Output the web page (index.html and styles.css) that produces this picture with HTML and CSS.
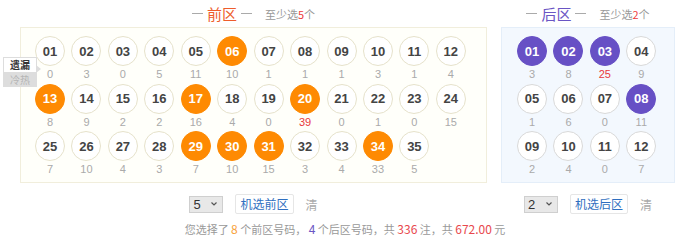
FILE: index.html
```html
<!DOCTYPE html>
<html lang="zh-CN">
<head>
  <meta charset="UTF-8" />
  <title>大乐透选号</title>
  <link rel="stylesheet" href="styles.css">
</head>
<body>
  <div class="zones">
    <div class="tabs">
      <div class="tab active">遗漏</div>
      <div class="tab">冷热</div>
    </div>

    <div class="zone front">
      <div class="zone-head">
        <span class="dash"></span><span class="title">前区</span><span class="dash"></span>
        <span class="tip">至少选<em>5</em>个</span>
      </div>
      <div class="box">
        <div class="ball-grid">
          <div class="cell"><span class="ball">01</span><span class="miss">0</span></div>
          <div class="cell"><span class="ball">02</span><span class="miss">3</span></div>
          <div class="cell"><span class="ball">03</span><span class="miss">0</span></div>
          <div class="cell"><span class="ball">04</span><span class="miss">5</span></div>
          <div class="cell"><span class="ball">05</span><span class="miss">11</span></div>
          <div class="cell"><span class="ball on">06</span><span class="miss">10</span></div>
          <div class="cell"><span class="ball">07</span><span class="miss">1</span></div>
          <div class="cell"><span class="ball">08</span><span class="miss">1</span></div>
          <div class="cell"><span class="ball">09</span><span class="miss">1</span></div>
          <div class="cell"><span class="ball">10</span><span class="miss">3</span></div>
          <div class="cell"><span class="ball">11</span><span class="miss">1</span></div>
          <div class="cell"><span class="ball">12</span><span class="miss">4</span></div>

          <div class="cell"><span class="ball on">13</span><span class="miss">8</span></div>
          <div class="cell"><span class="ball">14</span><span class="miss">9</span></div>
          <div class="cell"><span class="ball">15</span><span class="miss">2</span></div>
          <div class="cell"><span class="ball">16</span><span class="miss">2</span></div>
          <div class="cell"><span class="ball on">17</span><span class="miss">16</span></div>
          <div class="cell"><span class="ball">18</span><span class="miss">4</span></div>
          <div class="cell"><span class="ball">19</span><span class="miss">0</span></div>
          <div class="cell"><span class="ball on">20</span><span class="miss hot">39</span></div>
          <div class="cell"><span class="ball">21</span><span class="miss">0</span></div>
          <div class="cell"><span class="ball">22</span><span class="miss">1</span></div>
          <div class="cell"><span class="ball">23</span><span class="miss">0</span></div>
          <div class="cell"><span class="ball">24</span><span class="miss">15</span></div>

          <div class="cell"><span class="ball">25</span><span class="miss">7</span></div>
          <div class="cell"><span class="ball">26</span><span class="miss">10</span></div>
          <div class="cell"><span class="ball">27</span><span class="miss">4</span></div>
          <div class="cell"><span class="ball">28</span><span class="miss">3</span></div>
          <div class="cell"><span class="ball on">29</span><span class="miss">7</span></div>
          <div class="cell"><span class="ball on">30</span><span class="miss">10</span></div>
          <div class="cell"><span class="ball on">31</span><span class="miss">15</span></div>
          <div class="cell"><span class="ball">32</span><span class="miss">3</span></div>
          <div class="cell"><span class="ball">33</span><span class="miss">4</span></div>
          <div class="cell"><span class="ball on">34</span><span class="miss">33</span></div>
          <div class="cell"><span class="ball">35</span><span class="miss">5</span></div>
        </div>
      </div>
      <div class="controls">
        <span class="sel">
          <select><option>5</option></select>
          <svg width="8" height="6" viewBox="0 0 8 6"><path d="M1.5 1.5 L4 4 L6.5 1.5" fill="none" stroke="#555" stroke-width="1.2"/></svg>
        </span>
        <button class="pick">机选前区</button>
        <span class="clear">清</span>
      </div>
    </div>

    <div class="zone back">
      <div class="zone-head">
        <span class="dash"></span><span class="title">后区</span><span class="dash"></span>
        <span class="tip">至少选<em>2</em>个</span>
      </div>
      <div class="box">
        <div class="ball-grid">
          <div class="cell"><span class="ball on">01</span><span class="miss">3</span></div>
          <div class="cell"><span class="ball on">02</span><span class="miss">8</span></div>
          <div class="cell"><span class="ball on">03</span><span class="miss hot">25</span></div>
          <div class="cell"><span class="ball">04</span><span class="miss">9</span></div>

          <div class="cell"><span class="ball">05</span><span class="miss">1</span></div>
          <div class="cell"><span class="ball">06</span><span class="miss">6</span></div>
          <div class="cell"><span class="ball">07</span><span class="miss">0</span></div>
          <div class="cell"><span class="ball on">08</span><span class="miss">11</span></div>

          <div class="cell"><span class="ball">09</span><span class="miss">2</span></div>
          <div class="cell"><span class="ball">10</span><span class="miss">4</span></div>
          <div class="cell"><span class="ball">11</span><span class="miss">0</span></div>
          <div class="cell"><span class="ball">12</span><span class="miss">7</span></div>
        </div>
      </div>
      <div class="controls">
        <span class="sel">
          <select><option>2</option></select>
          <svg width="8" height="6" viewBox="0 0 8 6"><path d="M1.5 1.5 L4 4 L6.5 1.5" fill="none" stroke="#555" stroke-width="1.2"/></svg>
        </span>
        <button class="pick">机选后区</button>
        <span class="clear">清</span>
      </div>
    </div>
  </div>

  <p class="summary">
    您选择了 <em class="c-front">8</em> 个前区号码， <em class="c-back">4</em> 个后区号码，共 <em class="c-red">336</em> 注，共 <em class="c-red">672.00</em> 元
  </p>
</body>
</html>
```

FILE: styles.css
```css
body {
  margin: 0;
  font-family: "Liberation Sans", "Noto Sans CJK SC", sans-serif;
  background: #fff;
  color: #444;
}
em {
  font-style: normal;
}
.zones {
  position: relative;
  display: flex;
  gap: 14px;
  padding-left: 20px;
}
.zone.front {
  width: 467px;
}
.zone.back {
  width: 174px;
}
.zone-head {
  height: 27px;
  display: flex;
  justify-content: center;
  align-items: center;
  font-family: "Noto Sans CJK SC", sans-serif;
}
.dash {
  display: inline-block;
  width: 11px;
  height: 1px;
  background: #aaa;
}
.title {
  font-size: 15px;
  margin: 0 4px;
}
.front .title {
  color: #ee5c2c;
}
.back .title {
  color: #6a55c4;
}
.tip {
  margin-left: 13px;
  font-size: 11px;
  color: #999;
}
.tip em {
  color: #ee3b3b;
}
.box {
  border: 1px solid #f1eedc;
  background: #fffffa;
  padding: 8px 0 6px 14px;
}
.back .box {
  border-color: #e4eef9;
  background: #f3f8fe;
  padding-left: 15px;
}
.ball-grid {
  display: grid;
  grid-template-columns: repeat(12, 30px);
  column-gap: 6.45px;
  row-gap: 2.5px;
}
.back .ball-grid {
  grid-template-columns: repeat(4, 30px);
}
.cell {
  display: flex;
  flex-direction: column;
  align-items: center;
}
.ball {
  box-sizing: border-box;
  width: 30px;
  height: 30px;
  border-radius: 50%;
  border: 1px solid #e6e2cb;
  background: #fff;
  display: flex;
  justify-content: center;
  align-items: center;
  font-size: 13px;
  font-weight: bold;
  color: #444;
}
.back .ball {
  border-color: #d9d9d9;
}
.front .ball.on {
  background: #fe8a02;
  border-color: #fe8a02;
  color: #fff;
}
.back .ball.on {
  background: #6750c5;
  border-color: #6750c5;
  color: #fff;
}
.miss {
  margin-top: 1px;
  height: 14px;
  line-height: 14px;
  font-size: 11px;
  color: #aaa;
}
.miss.hot {
  color: #e8383d;
}
.tabs {
  position: absolute;
  left: 3px;
  top: 57px;
  width: 34px;
  font-family: "Noto Sans CJK SC", sans-serif;
  font-size: 10px;
  text-align: center;
}
.tab {
  height: 15px;
  line-height: 15px;
  background: #ddd;
  color: #b5b5b5;
}
.tab.active {
  position: relative;
  background: #fff;
  color: #333;
  font-weight: bold;
  border: 1px solid #ddd;
  border-bottom: none;
  height: 15px;
  box-sizing: border-box;
  line-height: 14px;
}
.tab.active::after {
  content: "";
  position: absolute;
  right: -5px;
  bottom: -1px;
  border-left: 5px solid #ddd;
  border-top: 4px solid transparent;
  border-bottom: 4px solid transparent;
}
.controls {
  display: flex;
  justify-content: center;
  align-items: center;
  gap: 12px;
  margin-top: 11px;
  height: 20px;
}
.sel {
  display: inline-flex;
  align-items: center;
  width: 34px;
  height: 17px;
  box-sizing: border-box;
  background: #e8e8e8;
  border: 1px solid #cfcfcf;
  padding: 0 4px 0 3px;
}
.sel select {
  appearance: none;
  -webkit-appearance: none;
  border: none;
  background: transparent;
  padding: 0;
  margin: 0;
  flex: 1;
  width: 18px;
  font-family: "Liberation Sans", sans-serif;
  font-size: 13px;
  color: #333;
}
.pick {
  height: 20px;
  padding: 0 4px;
  background: #fff;
  border: 1px solid #e6e6e6;
  border-radius: 2px;
  font-family: "Noto Sans CJK SC", sans-serif;
  font-size: 12px;
  color: #2f6fc0;
  cursor: pointer;
  line-height: 18px;
}
.clear {
  font-family: "Noto Sans CJK SC", sans-serif;
  font-size: 12px;
  color: #aaa;
}
.summary {
  margin: 7px 0 0;
  text-align: center;
  font-family: "Noto Sans CJK SC", sans-serif;
  font-size: 11px;
  line-height: 16px;
  color: #999;
}
.summary em {
  font-size: 12px;
}
.c-front {
  color: #f8a23a;
}
.c-back {
  color: #6a55c4;
}
.c-red {
  color: #e8484d;
}
```
